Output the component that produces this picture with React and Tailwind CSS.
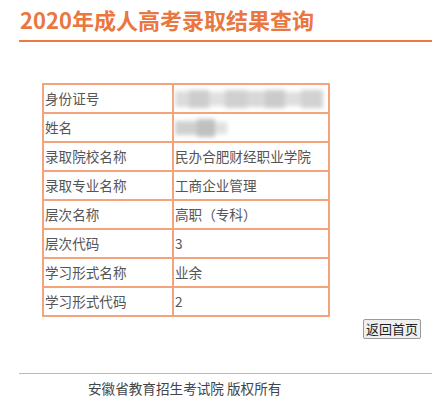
import React from 'react';

const rows = [
  { label: '身份证号', value: null, blur: 'id' },
  { label: '姓名', value: null, blur: 'name' },
  { label: '录取院校名称', value: '民办合肥财经职业学院' },
  { label: '录取专业名称', value: '工商企业管理' },
  { label: '层次名称', value: '高职（专科）' },
  { label: '层次代码', value: '3' },
  { label: '学习形式名称', value: '业余' },
  { label: '学习形式代码', value: '2' },
];

const font = { fontFamily: '"Noto Sans CJK SC", "Noto Sans", sans-serif' };

// mosaic placeholder for hidden personal data
const Blurred = ({ kind }) => {
  if (kind === 'name') {
    return (
      <div className="flex h-[20px] items-center blur-[2px]">
        <div className="h-[14px] w-[22px] bg-[#cfcfcf]" />
        <div className="h-[18px] w-[18px] bg-[#c0c0c0]" />
        <div className="h-[12px] w-[12px] bg-[#e0e0e0]" />
      </div>
    );
  }
  return (
    <div className="flex h-[20px] items-center blur-[2px]">
      <div className="h-[16px] w-[14px] bg-[#dcdcdc]" />
      <div className="h-[18px] w-[20px] bg-[#cdcdcd]" />
      <div className="h-[14px] w-[16px] bg-[#e0e0e0]" />
      <div className="h-[18px] w-[22px] bg-[#d0d0d0]" />
      <div className="h-[16px] w-[18px] bg-[#d8d8d8]" />
      <div className="h-[18px] w-[20px] bg-[#cbcbcb]" />
      <div className="h-[14px] w-[16px] bg-[#dedede]" />
      <div className="h-[18px] w-[22px] bg-[#d2d2d2]" />
    </div>
  );
};

export default function App() {
  return (
    <div className="w-[432px] h-[400px] bg-white overflow-hidden" style={font}>
      {/* header */}
      <div className="ml-[19px] border-b-2 border-[#eb7a45] pt-[4px] pb-[6px]">
        <h1 className="pl-[1px] text-[22px] leading-[30px] font-bold text-[#ea7640]">
          2020年成人高考录取结果查询
        </h1>
      </div>

      {/* result table */}
      <table className="ml-[42px] mt-[41px] border-collapse text-[13.6px] text-[#555]">
        <tbody>
          {rows.map((r) => (
            <tr key={r.label} className="h-[29px]">
              <td className="w-[130px] border-2 border-[#f4a47c] pl-[1px] leading-[25px]">{r.label}</td>
              <td className="w-[156px] border-2 border-[#f4a47c] pl-[1px] leading-[25px]">
                {r.value ?? <Blurred kind={r.blur} />}
              </td>
            </tr>
          ))}
        </tbody>
      </table>

      <div className="flex justify-end pr-[11px] mt-[2px]">
        <button className="h-[20px] w-[58px] rounded-[2px] border border-[#9a9a9a] bg-[#efefef] text-[13px] leading-[18px] text-[#222]">
          返回首页
        </button>
      </div>

      {/* footer */}
      <div className="ml-[19px] mt-[34px] h-px bg-[#f2a595]" />
      <p className="ml-[88px] mt-[5px] text-[13.6px] leading-[18px] text-[#444]">
        安徽省教育招生考试院 版权所有
      </p>
    </div>
  );
}
